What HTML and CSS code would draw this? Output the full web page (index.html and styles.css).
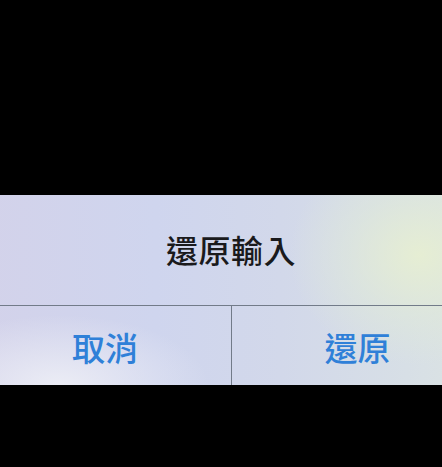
FILE: index.html
```html
<!DOCTYPE html>
<html lang="zh-Hant">
<head>
<meta charset="utf-8">
<link rel="stylesheet" href="styles.css">
</head>
<body>
<div class="screen">
  <div class="alert">
    <div class="title">還原輸入</div>
    <div class="buttons">
      <div class="btn btn-cancel">取消</div>
      <div class="btn btn-ok">還原</div>
    </div>
  </div>
</div>
</body>
</html>
```

FILE: styles.css
```css
html, body {
  margin: 0;
  padding: 0;
  background: #000;
}
.screen {
  width: 442px;
  height: 467px;
  overflow: hidden;
  padding-top: 195px;
  box-sizing: border-box;
  font-family: "Noto Sans CJK TC", "Noto Sans CJK SC", sans-serif;
}
.alert {
  width: 504px;
  margin-left: -21px;
  height: 190px;
  display: flex;
  flex-direction: column;
  background:
    radial-gradient(ellipse 130px 110px at 440px 60px, rgba(232,240,208,0.85), rgba(226,236,214,0.45) 55%, rgba(220,230,228,0) 100%),
    radial-gradient(ellipse 150px 70px at 80px 190px, rgba(238,239,246,0.9), rgba(234,236,244,0) 100%),
    linear-gradient(90deg, #d3d2ea 0%, #cfd5ee 35%, #d2d8ea 60%, #d7dfe6 85%, #dce4e2 100%);
}
.title {
  height: 111px;
  display: flex;
  align-items: center;
  justify-content: center;
  font-size: 32px;
  font-weight: 500;
  color: #1a1a1c;
  border-bottom: 1px solid #727b89;
  box-sizing: border-box;
  padding-bottom: 2px;
  letter-spacing: 0.5px;
}
.buttons {
  flex: 1;
  display: grid;
  grid-template-columns: 253px 1fr;
}
.btn {
  display: flex;
  align-items: center;
  justify-content: center;
  font-size: 33px;
  font-weight: 500;
  color: #2f80d8;
  padding-top: 3px;
}
.btn-cancel {
  border-right: 1px solid #727b89;
}
```
